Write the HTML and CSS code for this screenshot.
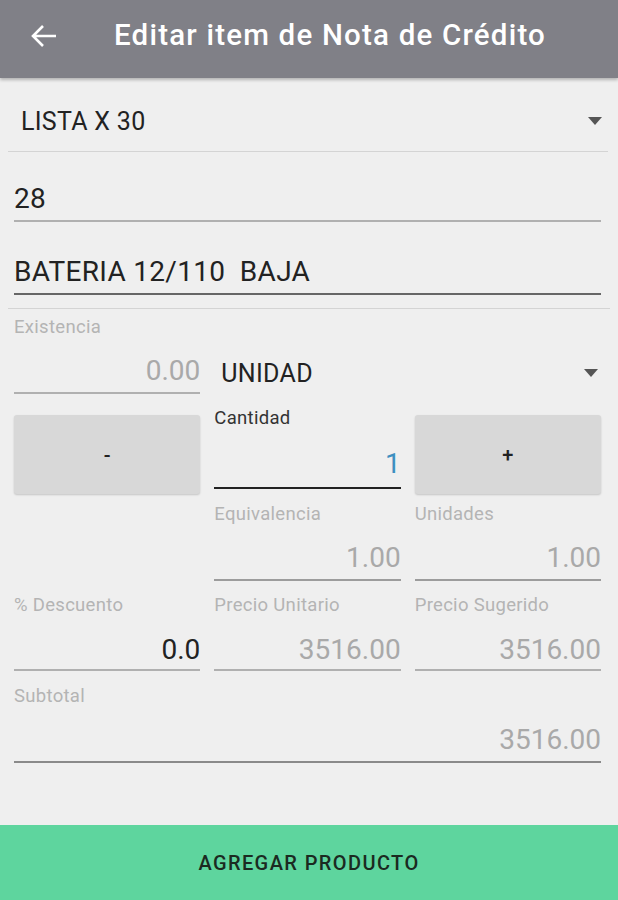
FILE: index.html
```html
<!DOCTYPE html>
<html>
  <head>
    <meta charset="utf-8">
    <link rel="stylesheet" href="styles.css">
  </head>
  <body>
    <div class="toolbar">
      <svg class="back" width="28" height="24" viewBox="0 0 28 24">
        <path d="M26 12H3M13 2L3 12l10 10" fill="none" stroke="#fff" stroke-width="2.6"/>
      </svg>
      <span class="title">Editar item de Nota de Crédito</span>
    </div>
    <div class="content">
      <div class="spinner top">
        <span>LISTA X 30</span>
        <i class="caret"></i>
      </div>
      <div class="field wide first"><span class="value dark">28</span></div>
      <div class="field wide second"><span class="value dark">BATERIA 12/110&nbsp; BAJA</span></div>
      <div class="divider"></div>

      <div class="row">
        <div class="field">
          <label>Existencia</label>
          <span class="value num">0.00</span>
        </div>
        <div class="spinner unit">
          <span>UNIDAD</span>
          <i class="caret"></i>
        </div>
      </div>

      <div class="row qty">
        <button class="step">-</button>
        <div class="field focus">
          <label>Cantidad</label>
          <span class="value num blue">1</span>
        </div>
        <button class="step">+</button>
      </div>

      <div class="row equiv">
        <div></div>
        <div class="field">
          <label>Equivalencia</label>
          <span class="value num">1.00</span>
        </div>
        <div class="field">
          <label>Unidades</label>
          <span class="value num">1.00</span>
        </div>
      </div>

      <div class="row prices">
        <div class="field">
          <label>% Descuento</label>
          <span class="value num dark">0.0</span>
        </div>
        <div class="field">
          <label>Precio Unitario</label>
          <span class="value num">3516.00</span>
        </div>
        <div class="field">
          <label>Precio Sugerido</label>
          <span class="value num">3516.00</span>
        </div>
      </div>

      <div class="field wide subtotal">
        <label>Subtotal</label>
        <span class="value num">3516.00</span>
      </div>
    </div>
    <button class="add">AGREGAR PRODUCTO</button>
  </body>
</html>
```
FILE: styles.css
```css
body {
  margin: 0;
  padding: 0;
  height: 900px;
  display: flex;
  flex-direction: column;
  background: #efefef;
  font-family: Roboto, "Liberation Sans", sans-serif;
  color: #222;
}
.toolbar {
  height: 78px;
  flex: none;
  display: flex;
  align-items: center;
  background: #808087;
  box-shadow: 0 2px 3px rgba(0,0,0,0.25);
  position: relative;
  z-index: 1;
}
.back {
  margin-left: 30px;
  margin-top: -6px;
}
.title {
  margin-left: 56px;
  margin-top: -8px;
  color: #fff;
  font-size: 29.5px;
  font-weight: 500;
  letter-spacing: 1.2px;
}
.content {
  flex: 1;
}
.spinner {
  display: flex;
  align-items: center;
  justify-content: space-between;
  font-size: 25px;
  letter-spacing: 0.3px;
}
.spinner.top {
  height: 74px;
  margin: 0 10px 0 8px;
  padding: 13px 6px 0 13px;
  box-sizing: border-box;
  border-bottom: 1px solid #d4d4d4;
}
.caret {
  width: 0;
  height: 0;
  border-left: 7px solid transparent;
  border-right: 7px solid transparent;
  border-top: 8px solid #555;
}
.field {
  display: flex;
  flex-direction: column;
}
.field label {
  font-size: 18.5px;
  line-height: 20px;
  letter-spacing: 0.3px;
  color: #b4b4b4;
  margin-bottom: 19px;
}
.field .value {
  font-size: 28px;
  line-height: 30px;
  letter-spacing: 0.3px;
  color: #a9a9a9;
  padding-bottom: 6px;
  border-bottom: 2px solid #b0b0b0;
}
.field .value.num {
  text-align: right;
  letter-spacing: 0;
}
.field .value.dark {
  color: #222;
}
.field .value.blue {
  color: #3d8fc0;
}
.field.wide {
  margin: 0 17px 0 14px;
}
.field.first {
  margin-top: 32px;
}
.field.second {
  margin-top: 35px;
}
.field.second .value {
  border-bottom-color: #666;
}
.divider {
  height: 1px;
  background: #d4d4d4;
  margin: 13px 8px 8px 8px;
}
.row {
  display: grid;
  grid-template-columns: 1fr 1fr 1fr;
  column-gap: 14px;
  padding: 0 17px 0 14px;
}
.spinner.unit {
  grid-column: 2 / 4;
  align-self: end;
  height: 30px;
  margin-bottom: 6px;
  padding: 0 3px 0 7px;
}
.row.qty {
  margin-top: 14px;
}
.qty .field label {
  color: #333;
  margin-bottom: 21px;
}
.qty .field .value {
  padding-bottom: 8px;
  border-bottom-color: #222;
}
.step {
  height: 79px;
  margin-top: 7px;
  border: none;
  border-radius: 3px;
  background: #d8d8d8;
  box-shadow: 0 1px 2px rgba(0,0,0,0.18);
  font-family: Roboto, "Liberation Sans", sans-serif;
  font-size: 20px;
  font-weight: 500;
  color: #222;
}
.row.equiv {
  margin-top: 10px;
}
.equiv .value {
  border-bottom-color: #9c9c9c;
}
.row.prices {
  margin-top: 14px;
}
.prices label {
  margin-bottom: 20px;
}
.prices .value {
  padding-bottom: 4px;
}
.field.subtotal {
  margin-top: 15px;
}
.subtotal .value {
  border-bottom-color: #8a8a8a;
}
.add {
  flex: none;
  height: 75px;
  border: none;
  background: #5ed59e;
  font-family: Roboto, "Liberation Sans", sans-serif;
  font-size: 20px;
  font-weight: 500;
  letter-spacing: 1.4px;
  color: #1b2a21;
}
```
